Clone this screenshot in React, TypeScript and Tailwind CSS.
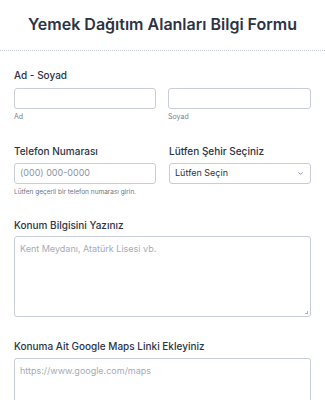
import { ChevronDown } from "lucide-react";

const font = { fontFamily: "Inter, 'Noto Sans', sans-serif" };

export default function App() {
  return (
    <div className="w-[325px] h-[400px] overflow-hidden bg-white text-[#2c3345]" style={font}>
      {/* Header */}
      <div className="h-[51px] flex items-center justify-center border-b border-dotted border-[#c3cad8]">
        <h1 className="text-[16px] font-semibold mt-[-3px]">Yemek Dağıtım Alanları Bilgi Formu</h1>
      </div>

      <div className="px-[14px]">
        {/* Ad - Soyad */}
        <div className="pt-[18px]">
          <p className="text-[10px] font-medium leading-[12px]">Ad - Soyad</p>
          <div className="flex gap-[12px] mt-[7px]">
            <div className="w-[142px]">
              <div className="h-[21px] rounded-[3px] border border-[#c9cdd9]"></div>
              <p className="text-[7px] text-[#7d8090] mt-[3px]">Ad</p>
            </div>
            <div className="w-[143px]">
              <div className="h-[21px] rounded-[3px] border border-[#c9cdd9]"></div>
              <p className="text-[7px] text-[#7d8090] mt-[3px]">Soyad</p>
            </div>
          </div>
        </div>

        {/* Telefon / Şehir */}
        <div className="flex gap-[13px] pt-[22px]">
          <div className="w-[142px]">
            <p className="text-[10px] font-medium leading-[12px]">Telefon Numarası</p>
            <div className="h-[21px] rounded-[3px] border border-[#c9cdd9] mt-[6px] flex items-center px-[5px] text-[9px] text-[#8d94a6]">(000) 000-0000</div>
            <p className="text-[6.5px] text-[#6f7383] mt-[4px]">Lütfen geçerli bir telefon numarası girin.</p>
          </div>
          <div className="w-[142px]">
            <p className="text-[10px] font-medium leading-[12px]">Lütfen Şehir Seçiniz</p>
            <div className="h-[21px] rounded-[3px] border border-[#c9cdd9] mt-[6px] flex items-center justify-between pl-[5px] pr-[6px] text-[9px] text-[#2c3345]">
              <span>Lütfen Seçin</span>
              <ChevronDown size={7} strokeWidth={2.5} className="text-[#57647e]" />
            </div>
          </div>
        </div>

        {/* Konum */}
        <div className="pt-[22px]">
          <p className="text-[10px] font-medium leading-[12px]">Konum Bilgisini Yazınız</p>
          <div className="h-[81px] rounded-[3px] border border-[#c9cdd9] mt-[5px] px-[5px] pt-[5px] text-[9px] text-[#a4abbb] relative">
            Kent Meydanı, Atatürk Lisesi vb.
            <span className="absolute right-[2px] bottom-[2px] w-[3px] h-[3px] border-r border-b border-[#b0b5c2]"></span>
          </div>
        </div>

        {/* Google Maps */}
        <div className="pt-[23px]">
          <p className="text-[10px] font-medium leading-[12px]">Konuma Ait Google Maps Linki Ekleyiniz</p>
          <div className="h-[60px] rounded-[3px] border border-[#c9cdd9] mt-[6px] px-[5px] pt-[5px] text-[9px] text-[#a4abbb]">
            https://www.google.com/maps
          </div>
        </div>
      </div>
    </div>
  );
}
